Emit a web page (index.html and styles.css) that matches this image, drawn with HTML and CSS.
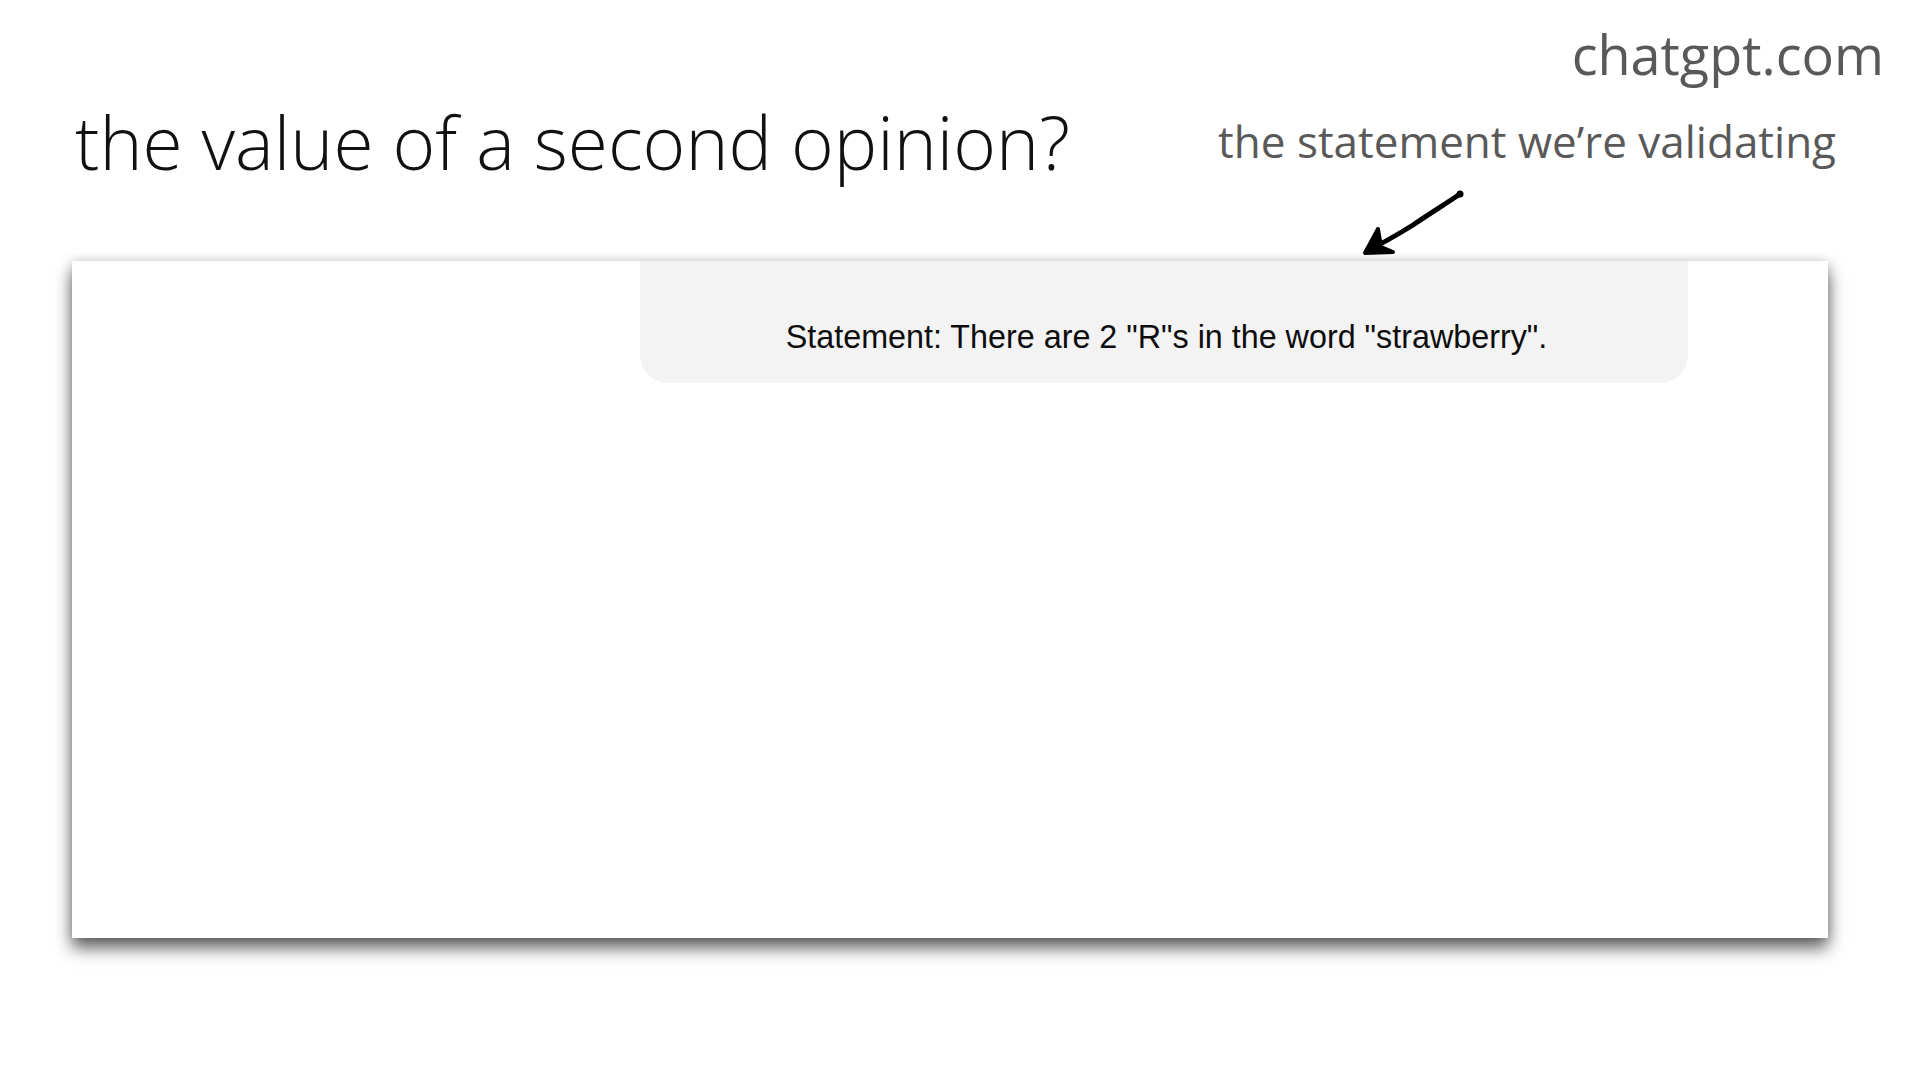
FILE: index.html
```html
<!DOCTYPE html>
<html>
<head>
<meta charset="utf-8">
<link rel="stylesheet" href="styles.css">
</head>
<body>
<div class="slide">
  <header class="header">
    <h1 class="title">the value of a second opinion?</h1>
    <div class="side">
      <div class="site">chatgpt.com</div>
      <div class="note">the statement we’re validating</div>
    </div>
  </header>
  <section class="card">
    <div class="bubble">Statement: There are 2 "R"s in the word "strawberry".</div>
  </section>
  <svg class="arrow" width="120" height="80" viewBox="0 0 120 80">
    <path d="M105 9 C92 18 74 29 58 40 C42 50 26 59 12 66" fill="none" stroke="#000" stroke-width="5" stroke-linecap="round"/>
    <path d="M23 44 L10 68 L38 67 L26 62 Z" fill="#000" stroke="#000" stroke-width="4" stroke-linejoin="round"/>
    <circle cx="105" cy="9" r="3.5" fill="#000"/>
  </svg>
</div>
</body>
</html>
```
FILE: styles.css
```css
* { box-sizing: border-box; }
html, body { margin: 0; padding: 0; background: #fff; }
.slide {
  position: relative;
  width: 1920px;
  height: 1080px;
  overflow: hidden;
}
.header {
  height: 261px;
  display: flex;
  justify-content: space-between;
  align-items: flex-start;
}
.title {
  margin: 105px 0 0 75px;
  font-family: "Open Sans", sans-serif;
  font-weight: 300;
  font-size: 73px;
  line-height: 1;
  color: #111;
  letter-spacing: 0;
}
.side {
  display: flex;
  flex-direction: column;
  align-items: flex-end;
  padding: 27px 36px 0 0;
  font-family: "Open Sans", sans-serif;
  color: #595959;
}
.site {
  font-size: 54px;
  line-height: 1;
}
.note {
  margin-top: 38px;
  margin-right: 48px;
  font-size: 44px;
  line-height: 1;
}
.card {
  margin: 0 92px 0 72px;
  height: 677px;
  background: #fff;
  box-shadow: 0 10px 16px rgba(0,0,0,0.62), 0 0 10px rgba(0,0,0,0.15);
  padding-left: 568px;
}
.bubble {
  width: 1048px;
  height: 122px;
  background: #f3f3f3;
  border-radius: 0 0 28px 28px;
  padding: 56px 0 0 5px;
  text-align: center;
  font-family: "Liberation Sans", Arial, sans-serif;
  font-size: 32.3px;
  line-height: 40px;
  color: #0d0d0d;
}
.arrow {
  position: absolute;
  left: 1355px;
  top: 185px;
}
```
